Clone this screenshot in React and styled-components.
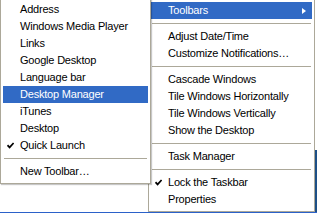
import React from 'react'
import styled, { createGlobalStyle } from 'styled-components'

const GlobalStyle = createGlobalStyle`
    html, body {
        margin: 0;
        padding: 0;
        background: #ffffff;
        overflow: hidden;
    }
`

const Screen = styled.div`
    position: relative;
    width: 317px;
    height: 213px;
    overflow: hidden;
    display: flex;
    flex-direction: column;
    font-family: "Liberation Sans", Arial, sans-serif;
    font-size: 11px;
    letter-spacing: -0.2px;
    color: #000;
`

const Desktop = styled.div`
    flex: 1;
    display: flex;
`

const Blank = styled.div`
    flex: 1;
    background: #ffffff;
`

const Edge = styled.div`
    width: 2px;
    background: linear-gradient(#ffffff 0 150px, #1d4f86 150px);
`

const Taskbar = styled.div`
    height: 1px;
    background: #2b61c9;
`

const Menu = styled.div`
    position: absolute;
    left: ${p => p.$left}px;
    top: ${p => p.$top}px;
    width: ${p => p.$width}px;
    box-sizing: border-box;
    border: 1px solid #aca899;
    padding: 3px 2px;
    background: #ffffff;
    box-shadow: ${p => (p.$shadow ? '1px 1px 1px rgba(0, 0, 0, 0.22)' : 'none')};
    display: flex;
    flex-direction: column;
`

const Item = styled.div`
    display: flex;
    align-items: center;
    height: 17px;
    line-height: 17px;
    white-space: nowrap;
    background: ${p => (p.$active ? '#316ac5' : 'transparent')};
    color: ${p => (p.$active ? '#ffffff' : '#000000')};
`

const Slot = styled.span`
    width: 17px;
    flex: none;
    display: flex;
    align-items: center;
    padding-left: 4px;
    box-sizing: border-box;
`

const Label = styled.span`
    flex: 1;
`

const Arrow = styled.span`
    width: 0;
    height: 0;
    margin-right: 6px;
    border-top: 3.5px solid transparent;
    border-bottom: 3.5px solid transparent;
    border-left: 4px solid #ffffff;
`

const Separator = styled.div`
    height: 9px;
    display: flex;
    align-items: center;
    &::after {
        content: '';
        flex: 1;
        height: 1px;
        margin: 0 1px;
        background: #aca899;
    }
`

const Check = () => (
    <svg width="7" height="7" viewBox="0 0 7 7">
        <path d="M0.5 3.2 L2.6 5.4 L6.6 1" fill="none" stroke="#000" strokeWidth="1.7" />
    </svg>
)

const MenuItem = ({ label, active, checked, submenu }) => (
    <Item $active={active}>
        <Slot>{checked && <Check />}</Slot>
        <Label>{label}</Label>
        {submenu && <Arrow />}
    </Item>
)

const toolbars = [
    { label: 'Address' },
    { label: 'Windows Media Player' },
    { label: 'Links' },
    { label: 'Google Desktop' },
    { label: 'Language bar' },
    { label: 'Desktop Manager', active: true },
    { label: 'iTunes' },
    { label: 'Desktop' },
    { label: 'Quick Launch', checked: true },
    { sep: true },
    { label: 'New Toolbar\u2026' },
]

const taskbarMenu = [
    { label: 'Toolbars', active: true, submenu: true },
    { sep: true },
    { label: 'Adjust Date/Time' },
    { label: 'Customize Notifications\u2026' },
    { sep: true },
    { label: 'Cascade Windows' },
    { label: 'Tile Windows Horizontally' },
    { label: 'Tile Windows Vertically' },
    { label: 'Show the Desktop' },
    { sep: true },
    { label: 'Task Manager' },
    { sep: true },
    { label: 'Lock the Taskbar', checked: true },
    { label: 'Properties' },
]

const renderItems = items =>
    items.map((it, i) => (it.sep ? <Separator key={i} /> : <MenuItem key={i} {...it} />))

export default function App() {
    return (
        <>
            <GlobalStyle />
            <Screen>
                <Desktop>
                    <Blank />
                    <Edge />
                </Desktop>
                <Taskbar />
                <Menu $left={148} $top={-2} $width={167}>
                    {renderItems(taskbarMenu)}
                </Menu>
                <Menu $left={0} $top={-3} $width={151} $shadow>
                    {renderItems(toolbars)}
                </Menu>
            </Screen>
        </>
    )
}
